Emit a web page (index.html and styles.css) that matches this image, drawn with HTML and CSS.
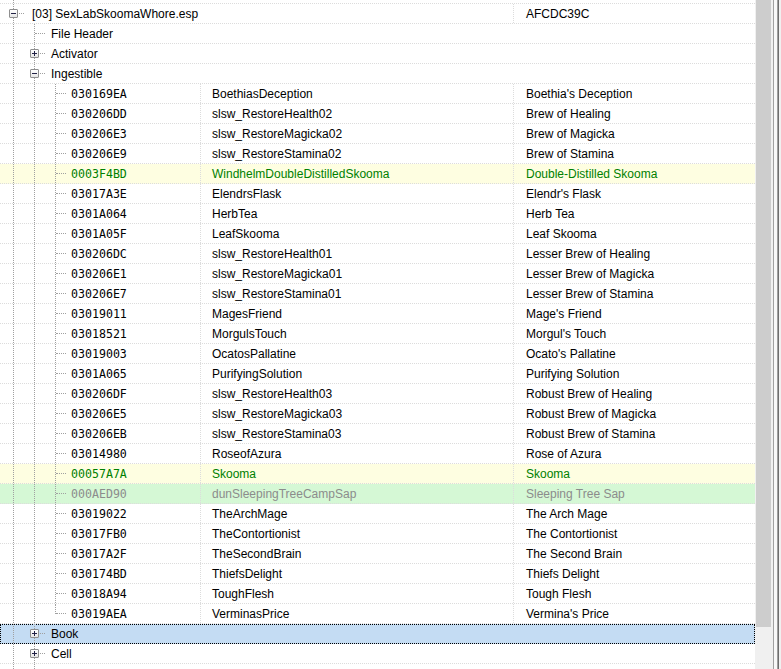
FILE: index.html
```html
<!DOCTYPE html>
<html lang="en">
<head>
    <meta charset="UTF-8">
    <title>xEdit - Ingestible</title>
    <link rel="stylesheet" href="styles.css">
</head>
<body>
    <div class="tree" id="tree"></div>
    <div class="vscroll"><div class="thumb"></div></div>
    <div class="splitter"></div>

    <script>
        const tree = document.getElementById('tree');

        // records of the Ingestible group: formid, editor id, name, state
        const records = [
            ['030169EA', 'BoethiasDeception', "Boethia's Deception"],
            ['030206DD', 'slsw_RestoreHealth02', 'Brew of Healing'],
            ['030206E3', 'slsw_RestoreMagicka02', 'Brew of Magicka'],
            ['030206E9', 'slsw_RestoreStamina02', 'Brew of Stamina'],
            ['0003F4BD', 'WindhelmDoubleDistilledSkooma', 'Double-Distilled Skooma', 'override'],
            ['03017A3E', 'ElendrsFlask', "Elendr's Flask"],
            ['0301A064', 'HerbTea', 'Herb Tea'],
            ['0301A05F', 'LeafSkooma', 'Leaf Skooma'],
            ['030206DC', 'slsw_RestoreHealth01', 'Lesser Brew of Healing'],
            ['030206E1', 'slsw_RestoreMagicka01', 'Lesser Brew of Magicka'],
            ['030206E7', 'slsw_RestoreStamina01', 'Lesser Brew of Stamina'],
            ['03019011', 'MagesFriend', "Mage's Friend"],
            ['03018521', 'MorgulsTouch', "Morgul's Touch"],
            ['03019003', 'OcatosPallatine', "Ocato's Pallatine"],
            ['0301A065', 'PurifyingSolution', 'Purifying Solution'],
            ['030206DF', 'slsw_RestoreHealth03', 'Robust Brew of Healing'],
            ['030206E5', 'slsw_RestoreMagicka03', 'Robust Brew of Magicka'],
            ['030206EB', 'slsw_RestoreStamina03', 'Robust Brew of Stamina'],
            ['03014980', 'RoseofAzura', 'Rose of Azura'],
            ['00057A7A', 'Skooma', 'Skooma', 'override'],
            ['000AED90', 'dunSleepingTreeCampSap', 'Sleeping Tree Sap', 'master'],
            ['03019022', 'TheArchMage', 'The Arch Mage'],
            ['03017FB0', 'TheContortionist', 'The Contortionist'],
            ['03017A2F', 'TheSecondBrain', 'The Second Brain'],
            ['030174BD', 'ThiefsDelight', 'Thiefs Delight'],
            ['03018A94', 'ToughFlesh', 'Tough Flesh'],
            ['03019AEA', 'VerminasPrice', "Vermina's Price"]
        ];

        function guide(type, toggle) {
            let box = toggle ? `<span class="toggle ${toggle}"></span>` : '';
            let arm = type === 'line' ? '' : '<span class="arm"></span>';
            return `<span class="guide g-${type}"><span class="stem">${arm}</span>${box}</span>`;
        }

        function groupRow(guides, label, extra) {
            return `<div class="row ${extra || ''}">
                <div class="cell c-name span-all">${guides}<span class="label">${label}</span></div>
            </div>`;
        }

        let html = `<div class="row stub"><div class="cell c-name">${guide('line')}</div></div>`;

        html += `<div class="row">
            <div class="cell c-name span-two">${guide('tee', 'minus')}<span class="label first">[03] SexLabSkoomaWhore.esp</span></div>
            <div class="cell c-full">AFCDC39C</div>
        </div>`;

        html += groupRow(guide('line') + guide('tee'), 'File Header');
        html += groupRow(guide('line') + guide('tee', 'plus'), 'Activator');
        html += groupRow(guide('line') + guide('tee', 'minus'), 'Ingestible');

        records.forEach((r, i) => {
            let last = i === records.length - 1;
            let guides = guide('line') + guide('line') + guide(last ? 'end' : 'tee');
            html += `<div class="row rec ${r[3] || ''}">
                <div class="cell c-name">${guides}<span class="label mono">${r[0]}</span></div>
                <div class="cell c-edid">${r[1]}</div>
                <div class="cell c-full">${r[2]}</div>
            </div>`;
        });

        html += groupRow(guide('line') + guide('tee', 'plus'), 'Book', 'selected');
        html += groupRow(guide('line') + guide('tee', 'plus'), 'Cell');
        html += groupRow(guide('line') + guide('tee', 'plus'), '');

        tree.innerHTML = html;
    </script>
</body>
</html>
```

FILE: styles.css
```css
* {
    margin: 0;
    padding: 0;
    box-sizing: border-box;
}

html, body {
    height: 100%;
}

body {
    font-family: "Liberation Sans", Arial, sans-serif;
    font-size: 12px;
    color: #000;
    background-color: #fff;
    display: flex;
    overflow: hidden;
}

.tree {
    width: 755px;
    flex: none;
    overflow: hidden;
}

.row {
    display: grid;
    grid-template-columns: 200px 313px 1fr;
    height: 20px;
    line-height: 19px;
    border-bottom: 1px dotted #dcdcdc;
    white-space: nowrap;
}

.row.stub {
    height: 4px;
}

.row.override {
    background-color: #fefee1;
    color: #008000;
}

.row.master {
    background-color: #d5f8d5;
    color: #8c8c8c;
}

.row.selected {
    background-color: #c4dcf3;
    outline: 1px dotted #000;
    outline-offset: -1px;
}

.cell {
    overflow: hidden;
}

.c-name {
    display: flex;
    padding-left: 3px;
}

.span-all {
    grid-column: 1 / -1;
}

.span-two {
    grid-column: 1 / 3;
}

.c-edid {
    border-left: 1px dotted #dcdcdc;
    padding: 1px 0 0 11px;
}

.c-full {
    border-left: 1px dotted #dcdcdc;
    padding: 1px 0 0 12px;
}

.label {
    margin-left: 6px;
    padding-top: 1px;
}

.label.first {
    margin-left: 8px;
}

.mono {
    font-family: "DejaVu Sans Mono", monospace;
    font-size: 11.6px;
    margin-left: 5px;
}

/* tree guide lines */
.guide {
    position: relative;
    flex: none;
    width: 21px;
    height: 100%;
    padding-left: 10px;
}

.stem {
    display: block;
    height: 100%;
    border-left: 1px dotted #a0a0a0;
}

.g-end .stem {
    height: 10px;
}

.arm {
    display: block;
    height: 10px;
    border-bottom: 1px dotted #a0a0a0;
}

.toggle {
    position: absolute;
    left: 6px;
    top: 5px;
    width: 9px;
    height: 9px;
    border: 1px solid #8f8f8f;
    border-radius: 1px;
    background: linear-gradient(#222246, #222246) center / 5px 1px no-repeat,
                linear-gradient(#fff, #e6e6e6);
}

.toggle.plus {
    background: linear-gradient(#222246, #222246) center / 5px 1px no-repeat,
                linear-gradient(#222246, #222246) center / 1px 5px no-repeat,
                linear-gradient(#fff, #e6e6e6);
}

/* scrollbar and splitter on the right */
.vscroll {
    width: 17px;
    flex: none;
    background-color: #f0f0f0;
    padding: 0 1px;
}

.thumb {
    height: 627px;
    background-color: #cdcdcd;
}

.splitter {
    width: 9px;
    flex: none;
    background: linear-gradient(to right,
        #f0f0f0 0 1px, #a0a0a0 1px 2px, #f8f8f8 2px 5px,
        #a0a0a0 5px 6px, #6e6e6e 6px 7px, #f0f0f0 7px);
}
```
